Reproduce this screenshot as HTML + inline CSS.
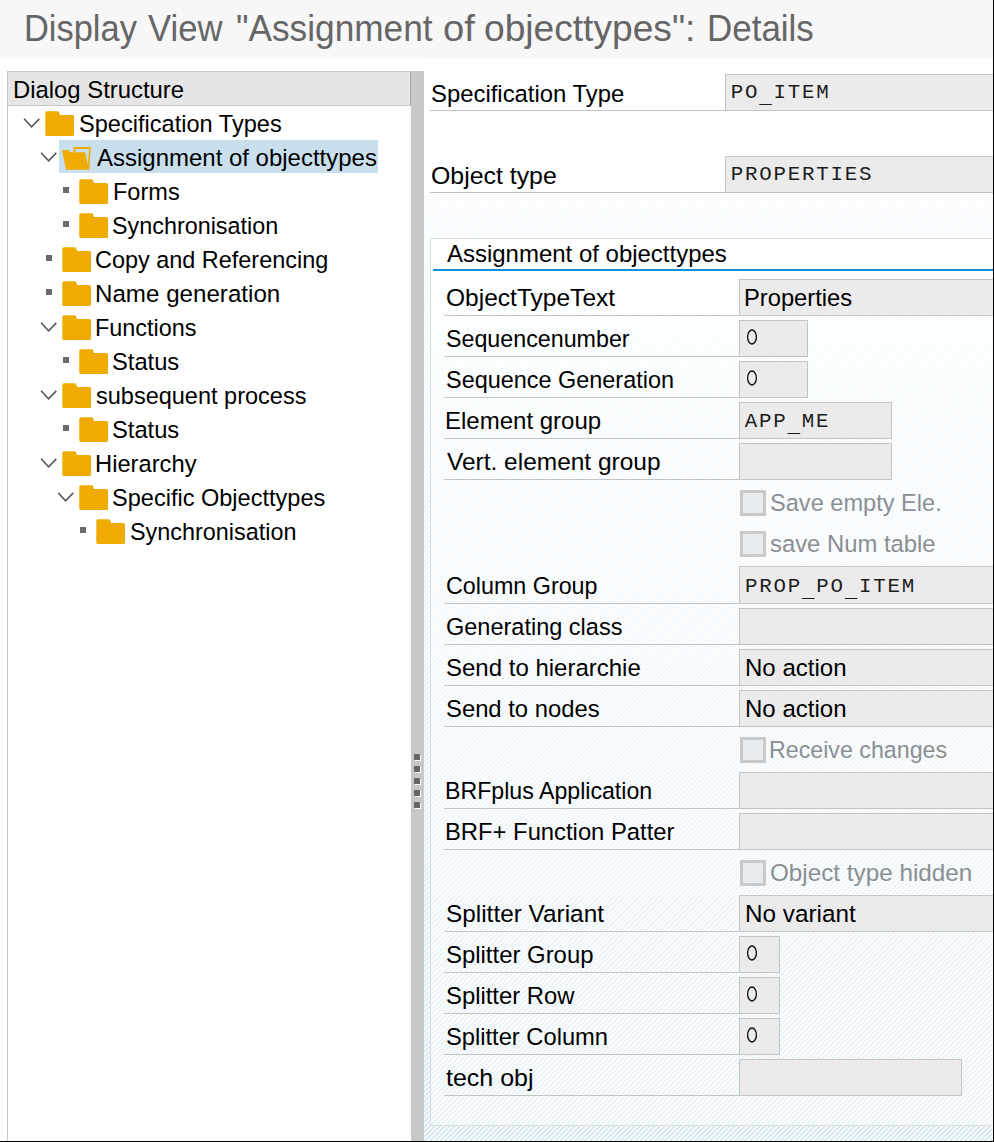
<!DOCTYPE html>
<html><head><meta charset="utf-8"><style>
html,body{margin:0;padding:0}
body{width:994px;height:1142px;position:relative;overflow:hidden;background:#fff;font-family:"Liberation Sans",sans-serif}
.t{position:absolute;white-space:pre;line-height:1}
.f{position:absolute;box-sizing:border-box;background:#ebebeb;border:1px solid #c4c4c4}
.u{position:absolute;height:1px;background:#c2c4c6}
.cb{position:absolute;box-sizing:border-box;width:26px;height:26px;border:3px solid #c9c9c9;background:#e8ecef}
</style></head><body>
<div style="position:absolute;left:0;top:0;width:993px;height:58px;background:#f7f7f7"></div>
<div style="position:absolute;left:7px;top:71px;width:404px;height:1070px;box-sizing:border-box;border-left:1px solid #c8c8c8;border-top:1px solid #c8c8c8;background:#fff"></div>
<div style="position:absolute;left:8px;top:72px;width:403px;height:34px;box-sizing:border-box;background:#e6e6e6;border-bottom:1px solid #c8c8c8;border-right:1px solid #a8a8a8"></div>
<div style="position:absolute;left:411px;top:71px;width:13px;height:1070px;background:#c8c8c8"></div>
<div style="position:absolute;left:424px;top:58px;width:568px;height:1083px;background:linear-gradient(to bottom,#fdfeff 0%,#eef5fa 50%,#d9eaf4 100%)"></div>
<svg width="568" height="1083" style="position:absolute;left:424px;top:58px" shape-rendering="crispEdges"><defs><pattern id="h" width="5" height="5" patternUnits="userSpaceOnUse"><g fill="#fff" fill-opacity="0.92"><rect x="0" y="0" width="1" height="1"/><rect x="1" y="0" width="1" height="1"/><rect x="0" y="1" width="1" height="1"/><rect x="4" y="1" width="1" height="1"/><rect x="3" y="2" width="1" height="1"/><rect x="4" y="2" width="1" height="1"/><rect x="2" y="3" width="1" height="1"/><rect x="3" y="3" width="1" height="1"/><rect x="1" y="4" width="1" height="1"/><rect x="2" y="4" width="1" height="1"/></g></pattern></defs><rect width="568" height="1083" fill="url(#h)"/></svg>
<div style="position:absolute;left:430px;top:238px;width:562px;height:888px;box-sizing:border-box;border:1px solid #dcdcdc;border-right:none;background:rgba(255,255,255,0.45)"></div>
<div style="position:absolute;left:431px;top:239px;width:561px;height:30px;background:#fff"></div>
<div style="position:absolute;left:433px;top:269px;width:560px;height:2px;background:#0a93d5"></div>
<svg width="18" height="12" viewBox="0 0 18 12" style="position:absolute;left:23px;top:117px"><path d="M1.1 1.7 L8.6 9.9 L16.3 1.9" fill="none" stroke="#555a60" stroke-width="1.6"/></svg><svg width="30" height="26" viewBox="0 0 30 26" style="position:absolute;left:44.5px;top:110.7px"><path d="M0.3 2 Q0.3 0.3 2 0.3 H12.6 Q13.6 0.3 14.2 1.6 L15.1 3.9 H27.3 Q29 3.9 29 5.6 V23.4 Q29 25 27.3 25 H2 Q0.3 25 0.3 23.4 Z" fill="#efab00"/></svg><div style="position:absolute;left:59px;top:140px;width:319px;height:33px;background:#c9dfed"></div><svg width="18" height="12" viewBox="0 0 18 12" style="position:absolute;left:40px;top:151px"><path d="M1.1 1.7 L8.6 9.9 L16.3 1.9" fill="none" stroke="#555a60" stroke-width="1.6"/></svg><svg width="31" height="25" viewBox="0 0 31 25" style="position:absolute;left:62px;top:147px"><path d="M11.9 0 H29 L27.2 22.8 H25.6 L27.1 1.9 H13.6 L12.9 5.3 H11.2 Z" fill="#efab00"/><path d="M0 3 H6.9 L8.3 5.3 H23 L27.2 22.8 H4 Z" fill="#efab00"/></svg><div style="position:absolute;left:63px;top:187px;width:6px;height:6px;background:#6b6b6b"></div><svg width="30" height="26" viewBox="0 0 30 26" style="position:absolute;left:78.5px;top:178.7px"><path d="M0.3 2 Q0.3 0.3 2 0.3 H12.6 Q13.6 0.3 14.2 1.6 L15.1 3.9 H27.3 Q29 3.9 29 5.6 V23.4 Q29 25 27.3 25 H2 Q0.3 25 0.3 23.4 Z" fill="#efab00"/></svg><div style="position:absolute;left:63px;top:221px;width:6px;height:6px;background:#6b6b6b"></div><svg width="30" height="26" viewBox="0 0 30 26" style="position:absolute;left:78.5px;top:212.7px"><path d="M0.3 2 Q0.3 0.3 2 0.3 H12.6 Q13.6 0.3 14.2 1.6 L15.1 3.9 H27.3 Q29 3.9 29 5.6 V23.4 Q29 25 27.3 25 H2 Q0.3 25 0.3 23.4 Z" fill="#efab00"/></svg><div style="position:absolute;left:46px;top:255px;width:6px;height:6px;background:#6b6b6b"></div><svg width="30" height="26" viewBox="0 0 30 26" style="position:absolute;left:61.5px;top:246.7px"><path d="M0.3 2 Q0.3 0.3 2 0.3 H12.6 Q13.6 0.3 14.2 1.6 L15.1 3.9 H27.3 Q29 3.9 29 5.6 V23.4 Q29 25 27.3 25 H2 Q0.3 25 0.3 23.4 Z" fill="#efab00"/></svg><div style="position:absolute;left:46px;top:289px;width:6px;height:6px;background:#6b6b6b"></div><svg width="30" height="26" viewBox="0 0 30 26" style="position:absolute;left:61.5px;top:280.7px"><path d="M0.3 2 Q0.3 0.3 2 0.3 H12.6 Q13.6 0.3 14.2 1.6 L15.1 3.9 H27.3 Q29 3.9 29 5.6 V23.4 Q29 25 27.3 25 H2 Q0.3 25 0.3 23.4 Z" fill="#efab00"/></svg><svg width="18" height="12" viewBox="0 0 18 12" style="position:absolute;left:40px;top:321px"><path d="M1.1 1.7 L8.6 9.9 L16.3 1.9" fill="none" stroke="#555a60" stroke-width="1.6"/></svg><svg width="30" height="26" viewBox="0 0 30 26" style="position:absolute;left:61.5px;top:314.7px"><path d="M0.3 2 Q0.3 0.3 2 0.3 H12.6 Q13.6 0.3 14.2 1.6 L15.1 3.9 H27.3 Q29 3.9 29 5.6 V23.4 Q29 25 27.3 25 H2 Q0.3 25 0.3 23.4 Z" fill="#efab00"/></svg><div style="position:absolute;left:63px;top:357px;width:6px;height:6px;background:#6b6b6b"></div><svg width="30" height="26" viewBox="0 0 30 26" style="position:absolute;left:78.5px;top:348.7px"><path d="M0.3 2 Q0.3 0.3 2 0.3 H12.6 Q13.6 0.3 14.2 1.6 L15.1 3.9 H27.3 Q29 3.9 29 5.6 V23.4 Q29 25 27.3 25 H2 Q0.3 25 0.3 23.4 Z" fill="#efab00"/></svg><svg width="18" height="12" viewBox="0 0 18 12" style="position:absolute;left:40px;top:389px"><path d="M1.1 1.7 L8.6 9.9 L16.3 1.9" fill="none" stroke="#555a60" stroke-width="1.6"/></svg><svg width="30" height="26" viewBox="0 0 30 26" style="position:absolute;left:61.5px;top:382.7px"><path d="M0.3 2 Q0.3 0.3 2 0.3 H12.6 Q13.6 0.3 14.2 1.6 L15.1 3.9 H27.3 Q29 3.9 29 5.6 V23.4 Q29 25 27.3 25 H2 Q0.3 25 0.3 23.4 Z" fill="#efab00"/></svg><div style="position:absolute;left:63px;top:425px;width:6px;height:6px;background:#6b6b6b"></div><svg width="30" height="26" viewBox="0 0 30 26" style="position:absolute;left:78.5px;top:416.7px"><path d="M0.3 2 Q0.3 0.3 2 0.3 H12.6 Q13.6 0.3 14.2 1.6 L15.1 3.9 H27.3 Q29 3.9 29 5.6 V23.4 Q29 25 27.3 25 H2 Q0.3 25 0.3 23.4 Z" fill="#efab00"/></svg><svg width="18" height="12" viewBox="0 0 18 12" style="position:absolute;left:40px;top:457px"><path d="M1.1 1.7 L8.6 9.9 L16.3 1.9" fill="none" stroke="#555a60" stroke-width="1.6"/></svg><svg width="30" height="26" viewBox="0 0 30 26" style="position:absolute;left:61.5px;top:450.7px"><path d="M0.3 2 Q0.3 0.3 2 0.3 H12.6 Q13.6 0.3 14.2 1.6 L15.1 3.9 H27.3 Q29 3.9 29 5.6 V23.4 Q29 25 27.3 25 H2 Q0.3 25 0.3 23.4 Z" fill="#efab00"/></svg><svg width="18" height="12" viewBox="0 0 18 12" style="position:absolute;left:57px;top:491px"><path d="M1.1 1.7 L8.6 9.9 L16.3 1.9" fill="none" stroke="#555a60" stroke-width="1.6"/></svg><svg width="30" height="26" viewBox="0 0 30 26" style="position:absolute;left:78.5px;top:484.7px"><path d="M0.3 2 Q0.3 0.3 2 0.3 H12.6 Q13.6 0.3 14.2 1.6 L15.1 3.9 H27.3 Q29 3.9 29 5.6 V23.4 Q29 25 27.3 25 H2 Q0.3 25 0.3 23.4 Z" fill="#efab00"/></svg><div style="position:absolute;left:80px;top:527px;width:6px;height:6px;background:#6b6b6b"></div><svg width="30" height="26" viewBox="0 0 30 26" style="position:absolute;left:95.5px;top:518.7px"><path d="M0.3 2 Q0.3 0.3 2 0.3 H12.6 Q13.6 0.3 14.2 1.6 L15.1 3.9 H27.3 Q29 3.9 29 5.6 V23.4 Q29 25 27.3 25 H2 Q0.3 25 0.3 23.4 Z" fill="#efab00"/></svg>
<div style="position:absolute;left:414px;top:754px;width:6px;height:6px;background:#666;box-shadow:1px 1px 0 #fff"></div><div style="position:absolute;left:414px;top:766px;width:6px;height:6px;background:#666;box-shadow:1px 1px 0 #fff"></div><div style="position:absolute;left:414px;top:778px;width:6px;height:6px;background:#666;box-shadow:1px 1px 0 #fff"></div><div style="position:absolute;left:414px;top:790px;width:6px;height:6px;background:#666;box-shadow:1px 1px 0 #fff"></div><div style="position:absolute;left:414px;top:802px;width:6px;height:6px;background:#666;box-shadow:1px 1px 0 #fff"></div>
<div class="u" style="left:430px;top:110px;width:563px"></div><div class="f" style="left:725px;top:74px;width:275px;height:37px"></div><div class="u" style="left:430px;top:192px;width:563px"></div><div class="f" style="left:725px;top:156px;width:275px;height:37px"></div><div class="u" style="left:444px;top:315px;width:296px"></div><div class="f" style="left:739px;top:279px;width:261px;height:37px"></div><div class="u" style="left:444px;top:356px;width:296px"></div><div class="f" style="left:739px;top:320px;width:69px;height:37px"></div><div class="u" style="left:444px;top:397px;width:296px"></div><div class="f" style="left:739px;top:361px;width:69px;height:37px"></div><div class="u" style="left:444px;top:438px;width:296px"></div><div class="f" style="left:739px;top:402px;width:153px;height:37px"></div><div class="u" style="left:444px;top:479px;width:296px"></div><div class="f" style="left:739px;top:443px;width:153px;height:37px"></div><div class="u" style="left:444px;top:603px;width:296px"></div><div class="f" style="left:739px;top:566px;width:261px;height:38px"></div><div class="u" style="left:444px;top:644px;width:296px"></div><div class="f" style="left:739px;top:608px;width:261px;height:37px"></div><div class="u" style="left:444px;top:685px;width:296px"></div><div class="f" style="left:739px;top:649px;width:261px;height:37px"></div><div class="u" style="left:444px;top:726px;width:296px"></div><div class="f" style="left:739px;top:690px;width:261px;height:37px"></div><div class="u" style="left:444px;top:808px;width:296px"></div><div class="f" style="left:739px;top:772px;width:261px;height:37px"></div><div class="u" style="left:444px;top:849px;width:296px"></div><div class="f" style="left:739px;top:813px;width:261px;height:37px"></div><div class="u" style="left:444px;top:931px;width:296px"></div><div class="f" style="left:739px;top:895px;width:261px;height:37px"></div><div class="u" style="left:444px;top:972px;width:296px"></div><div class="f" style="left:739px;top:936px;width:41px;height:37px"></div><div class="u" style="left:444px;top:1013px;width:296px"></div><div class="f" style="left:739px;top:977px;width:41px;height:37px"></div><div class="u" style="left:444px;top:1054px;width:296px"></div><div class="f" style="left:739px;top:1018px;width:41px;height:37px"></div><div class="u" style="left:444px;top:1095px;width:296px"></div><div class="f" style="left:739px;top:1059px;width:223px;height:37px"></div><svg width="20" height="24" style="position:absolute;left:742.30px;top:325.40px"><ellipse cx="10" cy="12" rx="4.4" ry="7.0" fill="none" stroke="#111" stroke-width="1.35"/></svg><svg width="20" height="24" style="position:absolute;left:742.30px;top:366.40px"><ellipse cx="10" cy="12" rx="4.4" ry="7.0" fill="none" stroke="#111" stroke-width="1.35"/></svg><svg width="20" height="24" style="position:absolute;left:742.30px;top:941.40px"><ellipse cx="10" cy="12" rx="4.4" ry="7.0" fill="none" stroke="#111" stroke-width="1.35"/></svg><svg width="20" height="24" style="position:absolute;left:742.30px;top:982.40px"><ellipse cx="10" cy="12" rx="4.4" ry="7.0" fill="none" stroke="#111" stroke-width="1.35"/></svg><svg width="20" height="24" style="position:absolute;left:742.30px;top:1023.40px"><ellipse cx="10" cy="12" rx="4.4" ry="7.0" fill="none" stroke="#111" stroke-width="1.35"/></svg><div class="cb" style="left:740px;top:490px"></div><div class="cb" style="left:740px;top:531px"></div><div class="cb" style="left:740px;top:737px"></div><div class="cb" style="left:740px;top:860px"></div>
<div class="t" style="left:24.34px;top:12.15px;font-size:35.700px;transform:scale(0.9646,1.04);transform-origin:0 30.35px;color:#666666">Display</div><div class="t" style="left:148.45px;top:12.15px;font-size:35.700px;transform:scale(0.9712,1.04);transform-origin:0 30.35px;color:#666666">View</div><div class="t" style="left:235.69px;top:12.15px;font-size:35.700px;transform:scale(0.9872,1.04);transform-origin:0 30.35px;color:#666666">"Assignment</div><div class="t" style="left:442.57px;top:12.15px;font-size:35.700px;transform:scale(1.0708,1.04);transform-origin:0 30.35px;color:#666666">of</div><div class="t" style="left:483.91px;top:12.15px;font-size:35.700px;transform:scale(1.0408,1.04);transform-origin:0 30.35px;color:#666666">objecttypes":</div><div class="t" style="left:706.70px;top:12.15px;font-size:35.700px;transform:scale(0.9794,1.04);transform-origin:0 30.35px;color:#666666">Details</div><div class="t" style="left:13.19px;top:78.54px;font-size:23.600px;transform:scale(1.0109,1.05);transform-origin:0 20.06px;color:#000">Dialog Structure</div><div class="t" style="left:78.82px;top:112.74px;font-size:23.600px;transform:scale(0.9993,1.05);transform-origin:0 20.06px;color:#000">Specification Types</div><div class="t" style="left:96.50px;top:146.74px;font-size:23.600px;transform:scale(1.0164,1.05);transform-origin:0 20.06px;color:#000">Assignment of objecttypes</div><div class="t" style="left:112.52px;top:180.74px;font-size:23.600px;transform:scale(0.9970,1.05);transform-origin:0 20.06px;color:#000">Forms</div><div class="t" style="left:112.33px;top:214.74px;font-size:23.600px;transform:scale(0.9897,1.05);transform-origin:0 20.06px;color:#000">Synchronisation</div><div class="t" style="left:95.43px;top:248.74px;font-size:23.600px;transform:scale(0.9934,1.05);transform-origin:0 20.06px;color:#000">Copy and Referencing</div><div class="t" style="left:94.67px;top:282.74px;font-size:23.600px;transform:scale(1.0236,1.05);transform-origin:0 20.06px;color:#000">Name generation</div><div class="t" style="left:94.73px;top:316.74px;font-size:23.600px;transform:scale(0.9910,1.05);transform-origin:0 20.06px;color:#000">Functions</div><div class="t" style="left:112.41px;top:350.74px;font-size:23.600px;transform:scale(1.0046,1.05);transform-origin:0 20.06px;color:#000">Status</div><div class="t" style="left:95.89px;top:384.74px;font-size:23.600px;transform:scale(0.9963,1.05);transform-origin:0 20.06px;color:#000">subsequent process</div><div class="t" style="left:112.41px;top:418.74px;font-size:23.600px;transform:scale(1.0046,1.05);transform-origin:0 20.06px;color:#000">Status</div><div class="t" style="left:94.70px;top:452.74px;font-size:23.600px;transform:scale(1.0059,1.05);transform-origin:0 20.06px;color:#000">Hierarchy</div><div class="t" style="left:112.42px;top:486.74px;font-size:23.600px;transform:scale(0.9977,1.05);transform-origin:0 20.06px;color:#000">Specific Objecttypes</div><div class="t" style="left:129.53px;top:520.74px;font-size:23.600px;transform:scale(0.9915,1.05);transform-origin:0 20.06px;color:#000">Synchronisation</div><div class="t" style="left:431.11px;top:82.69px;font-size:23.600px;transform:scale(1.0117,1.05);transform-origin:0 20.06px;color:#000">Specification Type</div><div class="t" style="left:430.86px;top:164.64px;font-size:23.600px;transform:scale(1.0533,1.05);transform-origin:0 20.06px;color:#000">Object type</div><div class="t" style="left:730.74px;top:83.49px;font-size:20.800px;letter-spacing:1.770px;font-family:'Liberation Mono',monospace;color:#1c1c1c">PO<span style="position:relative;top:5px">_</span>ITEM</div><div class="t" style="left:730.74px;top:165.49px;font-size:20.800px;letter-spacing:1.770px;font-family:'Liberation Mono',monospace;color:#1c1c1c">PROPERTIES</div><div class="t" style="left:446.90px;top:243.14px;font-size:23.600px;transform:scale(1.0160,1.05);transform-origin:0 20.06px;color:#000">Assignment of objecttypes</div><div class="t" style="left:445.57px;top:287.44px;font-size:23.600px;transform:scale(1.0401,1.05);transform-origin:0 20.06px;color:#000">ObjectTypeText</div><div class="t" style="left:445.64px;top:328.44px;font-size:23.600px;transform:scale(0.9855,1.05);transform-origin:0 20.06px;color:#000">Sequencenumber</div><div class="t" style="left:445.63px;top:369.44px;font-size:23.600px;transform:scale(0.9930,1.05);transform-origin:0 20.06px;color:#000">Sequence Generation</div><div class="t" style="left:444.88px;top:410.44px;font-size:23.600px;transform:scale(1.0175,1.05);transform-origin:0 20.06px;color:#000">Element group</div><div class="t" style="left:446.56px;top:451.44px;font-size:23.600px;transform:scale(1.0369,1.05);transform-origin:0 20.06px;color:#000">Vert. element group</div><div class="t" style="left:445.63px;top:575.44px;font-size:23.600px;transform:scale(0.9876,1.05);transform-origin:0 20.06px;color:#000">Column Group</div><div class="t" style="left:445.62px;top:616.44px;font-size:23.600px;transform:scale(0.9965,1.05);transform-origin:0 20.06px;color:#000">Generating class</div><div class="t" style="left:445.60px;top:657.44px;font-size:23.600px;transform:scale(1.0171,1.05);transform-origin:0 20.06px;color:#000">Send to hierarchie</div><div class="t" style="left:445.61px;top:698.44px;font-size:23.600px;transform:scale(1.0094,1.05);transform-origin:0 20.06px;color:#000">Send to nodes</div><div class="t" style="left:444.95px;top:780.44px;font-size:23.600px;transform:scale(0.9813,1.05);transform-origin:0 20.06px;color:#000">BRFplus Application</div><div class="t" style="left:444.90px;top:821.44px;font-size:23.600px;transform:scale(1.0085,1.05);transform-origin:0 20.06px;color:#000">BRF+ Function Patter</div><div class="t" style="left:445.58px;top:903.44px;font-size:23.600px;transform:scale(1.0326,1.05);transform-origin:0 20.06px;color:#000">Splitter Variant</div><div class="t" style="left:445.60px;top:944.44px;font-size:23.600px;transform:scale(1.0133,1.05);transform-origin:0 20.06px;color:#000">Splitter Group</div><div class="t" style="left:445.61px;top:985.44px;font-size:23.600px;transform:scale(1.0093,1.05);transform-origin:0 20.06px;color:#000">Splitter Row</div><div class="t" style="left:445.61px;top:1026.44px;font-size:23.600px;transform:scale(1.0045,1.05);transform-origin:0 20.06px;color:#000">Splitter Column</div><div class="t" style="left:446.30px;top:1067.44px;font-size:23.600px;transform:scale(1.0587,1.05);transform-origin:0 20.06px;color:#000">tech obj</div><div class="t" style="left:744.30px;top:287.24px;font-size:23.600px;transform:scale(1.0049,1.05);transform-origin:0 20.06px;color:#000">Properties</div><div class="t" style="left:744.80px;top:411.69px;font-size:20.800px;letter-spacing:1.770px;font-family:'Liberation Mono',monospace;color:#1c1c1c">APP<span style="position:relative;top:5px">_</span>ME</div><div class="t" style="left:745.04px;top:576.69px;font-size:20.800px;letter-spacing:1.770px;font-family:'Liberation Mono',monospace;color:#1c1c1c">PROP<span style="position:relative;top:5px">_</span>PO<span style="position:relative;top:5px">_</span>ITEM</div><div class="t" style="left:745.38px;top:656.94px;font-size:23.600px;transform:scale(1.0188,1.05);transform-origin:0 20.06px;color:#000">No action</div><div class="t" style="left:745.38px;top:697.94px;font-size:23.600px;transform:scale(1.0188,1.05);transform-origin:0 20.06px;color:#000">No action</div><div class="t" style="left:745.06px;top:902.94px;font-size:23.600px;transform:scale(1.0295,1.05);transform-origin:0 20.06px;color:#000">No variant</div><div class="t" style="left:769.82px;top:492.24px;font-size:23.600px;transform:scale(0.9994,1.05);transform-origin:0 20.06px;color:#8b8f94">Save empty Ele.</div><div class="t" style="left:770.28px;top:533.24px;font-size:23.600px;transform:scale(1.0103,1.05);transform-origin:0 20.06px;color:#8b8f94">save Num table</div><div class="t" style="left:769.14px;top:739.24px;font-size:23.600px;transform:scale(0.9837,1.05);transform-origin:0 20.06px;color:#8b8f94">Receive changes</div><div class="t" style="left:769.79px;top:862.24px;font-size:23.600px;transform:scale(1.0279,1.05);transform-origin:0 20.06px;color:#8b8f94">Object type hidden</div>
<div style="position:absolute;left:993px;top:0;width:1px;height:1142px;background:#000"></div>
<div style="position:absolute;left:0;top:1141px;width:994px;height:1px;background:#000"></div>
</body></html>
